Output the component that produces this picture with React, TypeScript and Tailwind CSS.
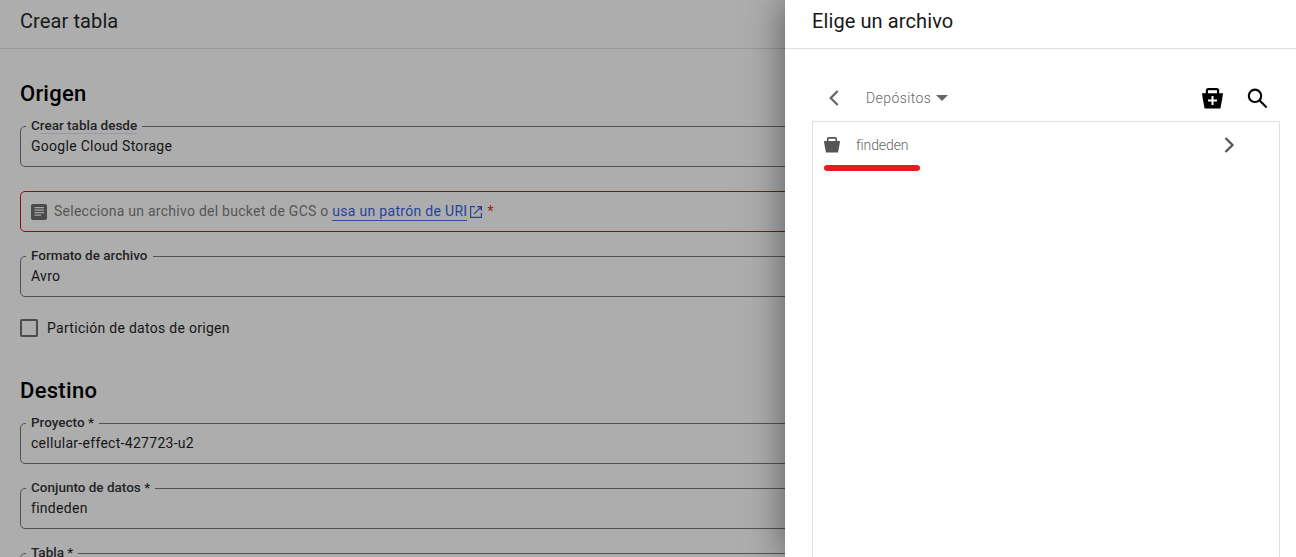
import React from "react";

function Field({ label, value }: { label: React.ReactNode; value: string }) {
  return (
    <fieldset className="h-[49px] min-w-0 rounded-[5px] border border-[#4f5357] pl-[5px]">
      <legend className="h-[17px] px-[5px] text-[13.5px] font-medium leading-[15px] text-[#232426]">{label}</legend>
      <div className="pl-[5px] pt-px text-[14px] leading-5 tracking-[0.29px] text-[#151617]">{value}</div>
    </fieldset>
  );
}

function FileIcon() {
  return (
    <svg className="h-4 w-4 shrink-0" viewBox="0 0 16 16">
      <rect width="16" height="16" rx="2" fill="#4b4b4b" />
      <path d="M3.5 3.7h9.5M3.5 6.2h9.5M3.5 8.7h9.5M3.5 11.2h6.5" stroke="#a4a4a4" strokeWidth="1.2" fill="none" />
    </svg>
  );
}

function Bucket({ size, fill, plus = false }: { size: number; fill: string; plus?: boolean }) {
  return (
    <svg width={size} height={size} viewBox="0 0 21 21">
      <path d="M4.9 7V2.6Q4.9 1.2 6.3 1.2H14.7Q16.1 1.2 16.1 2.6V7" fill="none" stroke={fill} strokeWidth="2.2" />
      <path d="M0 5.3H21L20.2 11L18.4 20.5H2.6L.8 11Z" fill={fill} />
      {plus && <path d="M10.5 8V17M6 12.5H15" stroke="#fff" strokeWidth="2" />}
    </svg>
  );
}

export default function App() {
  return (
    <div className="flex h-[557px] w-[1296px] overflow-hidden bg-white font-['Roboto',sans-serif]">
      <main className="flex w-[785px] shrink-0 flex-col bg-[#adadad]">
        <header className="h-[49px] shrink-0 border-b border-[#989898] pl-5 text-[20px] leading-[42px] tracking-[0.1px] text-[#171819]">Crear tabla</header>
        <div className="-mr-5 flex flex-col pl-5">
          <h2 className="mt-[29px] h-8 text-[22px] font-medium leading-8 tracking-[0.22px] text-black">Origen</h2>
          <div className="mt-2 flex flex-col">
            <Field
              label={
                <span className="flex">
                  C<span className="h-4 border-b border-[#9599aa]">rear tabla desde</span>
                </span>
              }
              value="Google Cloud Storage"
            />
            <div className="mt-6 flex h-[41px] items-center rounded-[5px] border border-[#8f0d0d] pl-[10px] text-[14px] tracking-[0.26px] text-[#555]">
              <FileIcon />
              <span className="ml-[7px] whitespace-pre">Selecciona un archivo del bucket de GCS o </span>
              <a className="h-[19px] border-b border-[#2f4d9a] leading-[18px] tracking-[0.3px] text-[#24449b]">usa un patrón de URI</a>
              <svg className="ml-[3px] h-3 w-3" viewBox="0 0 12 12" fill="none" stroke="#24449b" strokeWidth="1.2">
                <path d="M5 .6H.6V11.4H11.4V7M7.2 .6H11.4V4.8M11.4 .6L4 8" />
              </svg>
              <span className="ml-[5px] text-[#a31818]">*</span>
            </div>
            <div className="mt-4">
              <Field label="Formato de archivo" value="Avro" />
            </div>
          </div>
          <label className="mt-[21px] flex h-5 items-center text-[14px] tracking-[0.29px] text-[#151617]">
            <span className="mr-[9px] h-[18px] w-[18px] rounded-[2px] border-2 border-[#4b4b4b]" />
            Partición de datos de origen
          </label>
          <h2 className="mt-[37px] h-8 text-[22px] font-medium leading-8 tracking-[0.3px] text-black">Destino</h2>
          <div className="mt-2 flex flex-col gap-4">
            <Field label="Proyecto *" value="cellular-effect-427723-u2" />
            <Field label="Conjunto de datos *" value="findeden" />
            <Field label="Tabla *" value="" />
          </div>
        </div>
      </main>
      <aside className="relative flex w-[511px] shrink-0 flex-col bg-white shadow-[0_0_36px_rgba(0,0,0,0.5)]">
        <header className="h-[49px] shrink-0 border-b border-[#dfdfdf] pl-[27px] text-[20px] leading-[42px] tracking-[0.1px] text-[#171819]">Elige un archivo</header>
        <div className="mt-[25px] flex h-[47px] items-center pl-[27px] pt-px">
          <svg className="ml-4 h-4 w-[11px]" viewBox="0 0 11 16" fill="none" stroke="#666" strokeWidth="2.3">
            <path d="M9.7 1L2.7 8L9.7 15" />
          </svg>
          <span className="ml-[27px] text-[14px] font-light tracking-[0.42px] text-[#666]">Depósitos</span>
          <svg className="ml-[5px] h-[6px] w-3" viewBox="0 0 12 6">
            <path d="M0 0H12L6 6Z" fill="#666" />
          </svg>
          <div className="ml-auto mr-7 flex items-center gap-6">
            <Bucket size={21} fill="#000" plus />
            <svg className="h-[21px] w-[21px]" viewBox="0 0 21 21" fill="none" stroke="#000" strokeWidth="2.1">
              <circle cx="8" cy="7.8" r="6.2" />
              <path d="M12.4 12.2L19.6 19.4" />
            </svg>
          </div>
        </div>
        <section className="ml-[27px] mr-4 grow border border-b-0 border-[#dfdfdf]">
          <div className="flex h-[46px] items-center pl-[11px]">
            <Bucket size={16} fill="#555" />
            <span className="ml-4 text-[14px] font-light tracking-[-0.1px] text-[#666]">findeden</span>
            <svg className="ml-auto mr-[44px] h-4 w-[11px]" viewBox="0 0 11 16" fill="none" stroke="#555" strokeWidth="2.3">
              <path d="M1.5 1L8.5 8L1.5 15" />
            </svg>
          </div>
          <div className="-mt-[3px] ml-[10.5px] h-[6px] w-24 rounded-full bg-[#e81c1e]" />
        </section>
      </aside>
    </div>
  );
}
